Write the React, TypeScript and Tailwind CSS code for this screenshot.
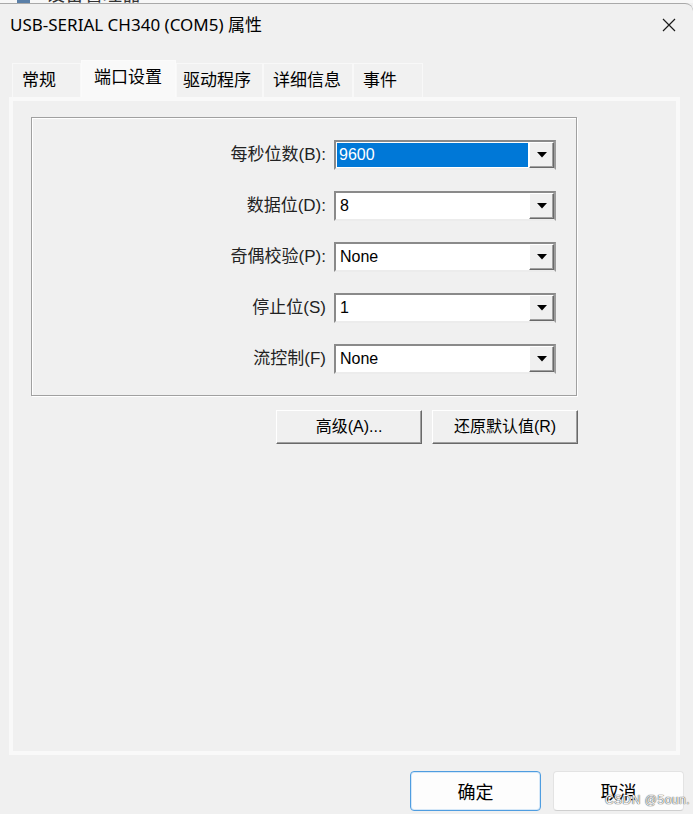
import React from 'react';

type Row = { label: string; value: string; selected?: boolean };

const rows: Row[] = [
  { label: '每秒位数(B):', value: '9600', selected: true },
  { label: '数据位(D):', value: '8' },
  { label: '奇偶校验(P):', value: 'None' },
  { label: '停止位(S)', value: '1' },
  { label: '流控制(F)', value: 'None' },
];

const tabs = [
  { label: '常规', w: 'w-[69px]', pl: 'pl-[9px]' },
  { label: '端口设置', w: 'w-[95px]', pl: 'pl-[12px]', active: true },
  { label: '驱动程序', w: 'w-[87px]', pl: 'pl-[6px]' },
  { label: '详细信息', w: 'w-[90px]', pl: 'pl-[9px]' },
  { label: '事件', w: 'w-[70px]', pl: 'pl-[9px]' },
];

function Combo({ value, selected }: { value: string; selected?: boolean }) {
  return (
    <div className="flex h-[30px] w-[222px] border-2 border-t-[#8a8a8a] border-l-[#8a8a8a] border-r-[#9c9c9c] border-b-[#ececec] bg-white text-[16px]">
      <div className="flex flex-1 p-[1px]">
        {selected ? (
          <div className="flex flex-1 items-center bg-[#0078d7] pl-[2px] text-white">{value}</div>
        ) : (
          <div className="flex flex-1 items-center pl-[3px] text-black">{value}</div>
        )}
      </div>
      <div className="flex w-[25px] items-center justify-center border border-t-white border-l-white border-r-[#696969] border-b-[#696969] bg-[#f0f0f0] shadow-[inset_-1px_-1px_0_#a0a0a0]">
        <svg width="10" height="6" viewBox="0 0 10 6">
          <polygon points="0,0 10,0 5,5.5" fill="#000" />
        </svg>
      </div>
    </div>
  );
}

function ClassicButton({ children }: { children: React.ReactNode }) {
  return (
    <button className="flex h-[34px] w-[146px] items-center justify-center border border-t-white border-l-white border-r-[#696969] border-b-[#696969] bg-[#f0f0f0] text-[16px] text-black shadow-[inset_-1px_-1px_0_#a0a0a0]">
      {children}
    </button>
  );
}

export default function App() {
  return (
    <div className="relative flex h-[814px] w-[693px] flex-col overflow-hidden bg-[#f0f0f0] font-['Liberation_Sans','Noto_Sans_CJK_SC',sans-serif]">
      {/* window behind, barely visible */}
      <div className="h-[3px] overflow-hidden bg-[#f7f7f7]">
        <div className="-mt-[17px] flex items-end gap-[16px] pl-[17px]">
          <div className="h-[18px] w-[13px] bg-[#5a7fa8]" />
          <span className="text-[19px] leading-[20px] text-[#333] font-['Noto_Sans_CJK_SC',sans-serif]">设备管理器</span>
        </div>
      </div>

      <div className="flex flex-1 flex-col rounded-tr-[8px] border-t border-[#a9a9a9] bg-[#f0f0f0]">
        <div className="flex h-[41px] items-center justify-between pl-[10px] pr-[17px]">
          <span className="text-[17px] text-black font-['Noto_Sans','Noto_Sans_CJK_SC',sans-serif]">
            USB-SERIAL CH340 (COM5) 属性
          </span>
          <svg width="14" height="14" viewBox="0 0 14 14">
            <path d="M1 1 L13 13 M13 1 L1 13" stroke="#1a1a1a" strokeWidth="1.2" fill="none" />
          </svg>
        </div>

        <div className="mt-[15px] flex h-[37px] items-end pl-[12px] font-['Noto_Sans_CJK_SC',sans-serif] text-[17px] text-black">
          {tabs.map((t) =>
            t.active ? (
              <div key={t.label} className={`${t.w} ${t.pl} h-[37px] border-x border-t border-[#fbfbfb] bg-[#f9f9f9] pt-[1px] leading-[28px]`}>
                {t.label}
              </div>
            ) : (
              <div key={t.label} className={`${t.w} ${t.pl} h-[34px] border-x border-t border-[#f8f8f8] bg-[#f1f1f1] pt-[1px] leading-[28px]`}>
                {t.label}
              </div>
            ),
          )}
        </div>

        <div className="ml-[9px] mr-[13px] h-[658px] border-[4px] border-[#f9f9f9] bg-[#f0f0f0]">
          <div className="ml-[18px] mt-[16px] w-[547px]">
            <div className="flex w-[546px] flex-col gap-[21px] border border-[#a0a0a0] pb-[21px] pt-[22px] shadow-[inset_1px_1px_0_#fff,1px_1px_0_#fff]">
              {rows.map((r) => (
                <div key={r.label} className="flex items-center justify-end gap-[8px] pr-[20px]">
                  <span className="text-[17px] text-[#222]">{r.label}</span>
                  <Combo value={r.value} selected={r.selected} />
                </div>
              ))}
            </div>
            <div className="mt-[14px] flex justify-end gap-[10px]">
              <ClassicButton>高级(A)...</ClassicButton>
              <ClassicButton>还原默认值(R)</ClassicButton>
            </div>
          </div>
        </div>

        <div className="mt-[16px] flex justify-end gap-[12px] pr-[9px] font-['Noto_Sans_CJK_SC',sans-serif] text-[18px] text-black">
          <button className="h-[40px] w-[131px] rounded-[4px] border border-[#4f9de0] bg-[#fdfdfd] shadow-[inset_0_0_0_1px_#d6e8f8]">
            确定
          </button>
          <button className="h-[40px] w-[131px] rounded-[4px] border border-[#e3e3e3] border-b-[#cfcfcf] bg-[#fdfdfd]">
            取消
          </button>
        </div>
      </div>

      <span className="absolute bottom-[5px] right-[3px] text-[12px] tracking-[0.5px] text-[#f4f4f4] [text-shadow:0_0_1px_#444,0_0_1px_#444]">
        CSDN @5oun.
      </span>
    </div>
  );
}
